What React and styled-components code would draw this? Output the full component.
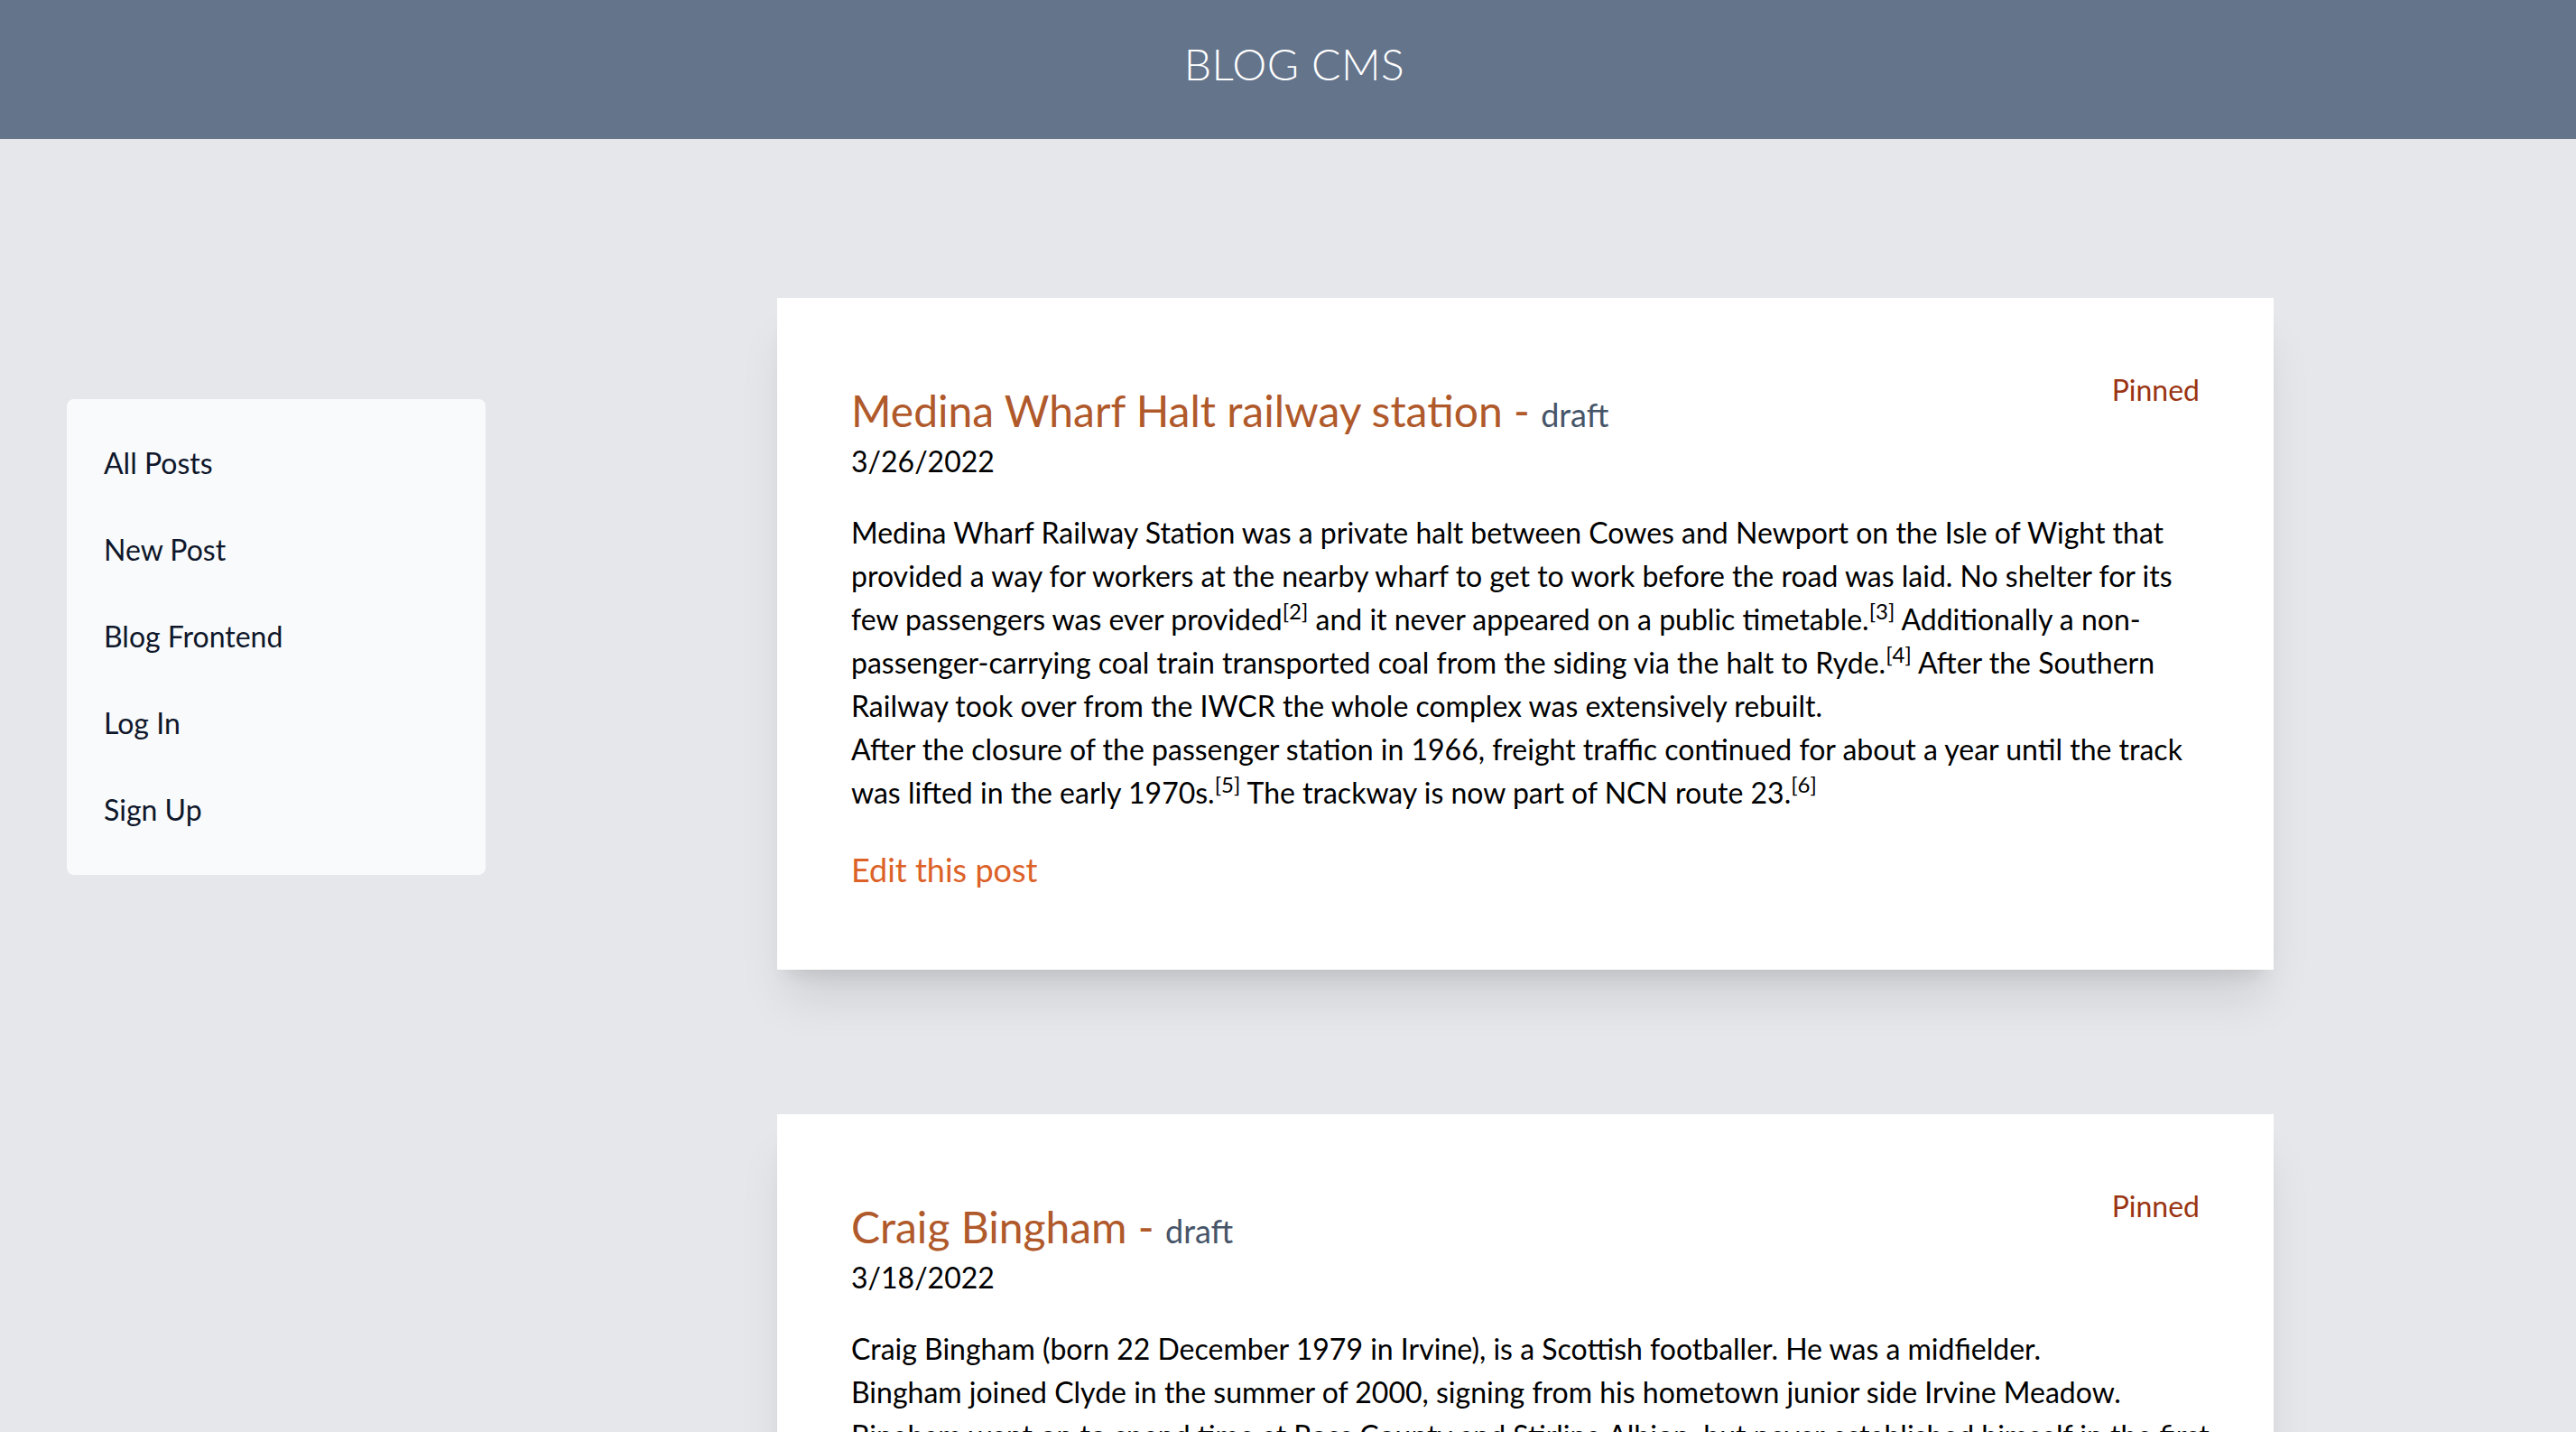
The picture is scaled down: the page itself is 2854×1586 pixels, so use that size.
import React from 'react';
import styled, { createGlobalStyle } from 'styled-components';

const GlobalStyle = createGlobalStyle`
  html { scrollbar-width: none; }
  html::-webkit-scrollbar { display: none; }
  * { box-sizing: border-box; }
  body {
    margin: 0;
    background: #e5e7eb;
    font-family: Lato, "Noto Sans", sans-serif;
    color: #000;
  }
`;

const Header = styled.header`
  height: 154px;
  background: #64748b;
  display: flex;
  justify-content: center;
  padding: 47px 0 0 14px;
`;

const Brand = styled.h1`
  margin: 0;
  font-size: 48px;
  line-height: 48px;
  font-weight: 300;
  letter-spacing: 0.5px;
  color: #ffffff;
`;

const Layout = styled.div`
  display: flex;
  align-items: flex-start;
  gap: 323px;
  padding: 176px 0 0 74px;
`;

const Sidebar = styled.nav`
  width: 464px;
  flex-shrink: 0;
  margin-top: 112px;
  background: #f8fafc;
  border-radius: 8px;
  padding: 23px 0 24px;
  display: flex;
  flex-direction: column;
`;

const NavLink = styled.a`
  display: block;
  padding: 24px 41px;
  font-size: 32px;
  line-height: 48px;
  color: #0f172a;
  text-decoration: none;
`;

const Feed = styled.main`
  width: 1658px;
  flex-shrink: 0;
  display: flex;
  flex-direction: column;
  gap: 160px;
`;

const Card = styled.article`
  background: #ffffff;
  padding: 78px 82px 84px;
  box-shadow: 0 40px 50px -10px rgba(0, 0, 0, 0.1), 0 16px 20px -12px rgba(0, 0, 0, 0.1);
`;

const CardHead = styled.div`
  display: flex;
  justify-content: space-between;
  align-items: flex-start;
`;

const TitleBlock = styled.div`
  display: flex;
  flex-direction: column;
`;

const Title = styled.h2`
  margin: 15px 0 0;
  font-size: 48px;
  line-height: 64px;
  font-weight: 400;
  color: #b0592b;
`;

const Status = styled.span`
  font-size: 36px;
  line-height: 1;
  color: #475569;
`;

const Pinned = styled.span`
  font-size: 32px;
  line-height: 48px;
  color: #9a3412;
`;

const PostDate = styled.div`
  font-size: 32px;
  line-height: 48px;
  color: #000;
`;

const Body = styled.p`
  margin: 31px 0 0;
  font-size: 32px;
  line-height: 48px;
  white-space: nowrap;
`;

const Ref = styled.sup`
  font-size: 75%;
  line-height: 0;
  position: relative;
  vertical-align: baseline;
  top: -0.5em;
`;

const EditLink = styled.a`
  display: inline-block;
  margin-top: 34px;
  font-size: 36px;
  line-height: 54px;
  color: #dc6228;
  text-decoration: none;
`;

const navItems = ['All Posts', 'New Post', 'Blog Frontend', 'Log In', 'Sign Up'];

function Post({ title, date, children }) {
  return (
    <Card>
      <CardHead>
        <TitleBlock>
          <Title>
            {title} - <Status>draft</Status>
          </Title>
          <PostDate>{date}</PostDate>
        </TitleBlock>
        <Pinned>Pinned</Pinned>
      </CardHead>
      <Body>{children}</Body>
      <div>
        <EditLink href="#">Edit this post</EditLink>
      </div>
    </Card>
  );
}

export default function App() {
  return (
    <>
      <GlobalStyle />
      <Header>
        <Brand>BLOG CMS</Brand>
      </Header>
      <Layout>
        <Sidebar>
          {navItems.map((item) => (
            <NavLink key={item} href="#">
              {item}
            </NavLink>
          ))}
        </Sidebar>
        <Feed>
          <Post title="Medina Wharf Halt railway station" date="3/26/2022">
            Medina Wharf Railway Station was a private halt between Cowes and Newport on the Isle of Wight that
            <br />
            provided a way for workers at the nearby wharf to get to work before the road was laid. No shelter for its
            <br />
            few passengers was ever provided<Ref>[2]</Ref> and it never appeared on a public timetable.<Ref>[3]</Ref> Additionally a non-
            <br />
            passenger-carrying coal train transported coal from the siding via the halt to Ryde.<Ref>[4]</Ref> After the Southern
            <br />
            Railway took over from the IWCR the whole complex was extensively rebuilt.
            <br />
            After the closure of the passenger station in 1966, freight traffic continued for about a year until the track
            <br />
            was lifted in the early 1970s.<Ref>[5]</Ref> The trackway is now part of NCN route 23.<Ref>[6]</Ref>
          </Post>
          <Post title="Craig Bingham" date="3/18/2022">
            Craig Bingham (born 22 December 1979 in Irvine), is a Scottish footballer. He was a midfielder.
            <br />
            Bingham joined Clyde in the summer of 2000, signing from his hometown junior side Irvine Meadow.
            <br />
            Bingham went on to spend time at Ross County and Stirling Albion, but never established himself in the first
            <br />
            team.
          </Post>
        </Feed>
      </Layout>
    </>
  );
}
